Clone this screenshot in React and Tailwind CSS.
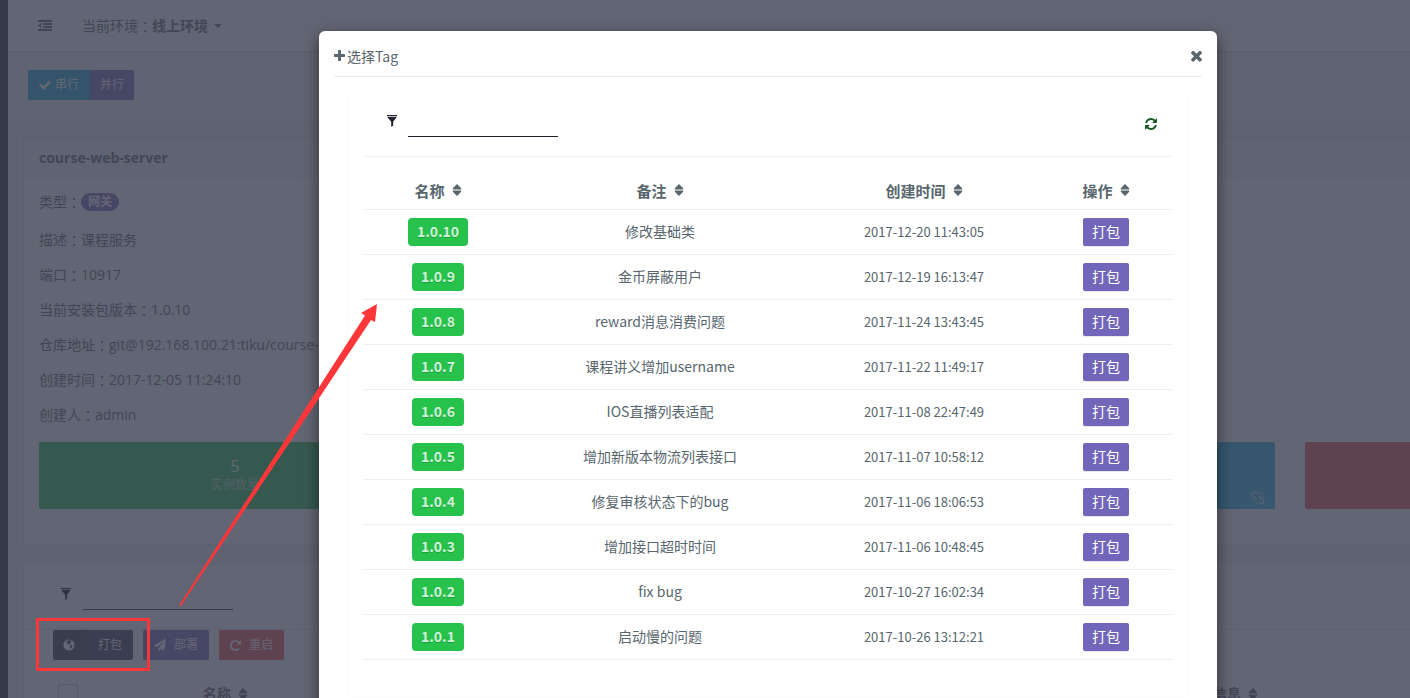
import React from "react";
import { FaPaperPlane } from "react-icons/fa";

const glyphs = {
  plus: ["0 0 1408 1408", "M1408 608v192q0 40-28 68t-68 28h-416v416q0 40-28 68t-68 28h-192q-40 0-68-28t-28-68v-416h-416q-40 0-68-28t-28-68v-192q0-40 28-68t68-28h416v-416q0-40 28-68t68-28h192q40 0 68 28t28 68v416h416q40 0 68 28t28 68z"],
  times: ["110 78 1188 1188", "M1298 1004q0 40-28 68l-136 136q-28 28-68 28t-68-28l-294-294-294 294q-28 28-68 28t-68-28l-136-136q-28-28-28-68t28-68l294-294-294-294q-28-28-28-68t28-68l136-136q28-28 68-28t68 28l294 294 294-294q28-28 68-28t68 28l136 136q28 28 28 68t-28 68l-294 294 294 294q28 28 28 68z"],
  refresh: ["0 0 1536 1536", "M1511 928q0 5-1 7-64 268-268 434.5t-478 166.5q-146 0-282.5-55t-243.5-157l-129 129q-19 19-45 19t-45-19-19-45v-448q0-26 19-45t45-19h448q26 0 45 19t19 45-19 45l-137 137q71 66 161 102t187 36q134 0 250-65t186-179q11-17 53-117 8-23 30-23h192q13 0 22.5 9.5t9.5 22.5zm25-800v448q0 26-19 45t-45 19h-448q-26 0-45-19t-19-45 19-45l138-138q-148-137-349-137-134 0-250 65t-186 179q-11 17-53 117-8 23-30 23h-199q-13 0-22.5-9.5t-9.5-22.5v-7q65-268 270-434.5t480-166.5q146 0 284 55.5t245 156.5l130-129q19-19 45-19t45 19 19 45z"],
  repeat: ["0 0 1536 1536", "M1536 128v448q0 26-19 45t-45 19h-448q-42 0-59-40-17-39 14-69l138-138q-148-137-349-137-104 0-198.5 40.5t-163.5 109.5-109.5 163.5-40.5 198.5 40.5 198.5 109.5 163.5 163.5 109.5 198.5 40.5q119 0 225-52t179-147q7-10 23-12 15 0 25 9l137 138q9 8 9.5 20.5t-7.5 22.5q-109 132-264 204.5t-327 72.5q-156 0-298-61t-245-164-164-245-61-298 61-298 164-245 245-164 298-61q147 0 284.5 55.5t244.5 156.5l130-129q29-31 70-14 39 17 39 59z"],
  check: ["100 240 1592 1300", "M1671 566q0 40-28 68l-724 724-136 136q-28 28-68 28t-68-28l-136-136-362-362q-28-28-28-68t28-68l136-136q28-28 68-28t68 28l294 295 656-657q28-28 68-28t68 28l136 136q28 28 28 68z"],
  outdent: ["0 128 1792 1408", "M384 544v576q0 13-9.5 22.5t-22.5 9.5q-14 0-23-9l-288-288q-9-9-9-23t9-23l288-288q9-9 23-9 13 0 22.5 9.5t9.5 22.5zm1408 768v192q0 13-9.5 22.5t-22.5 9.5h-1728q-13 0-22.5-9.5t-9.5-22.5v-192q0-13 9.5-22.5t22.5-9.5h1728q13 0 22.5 9.5t9.5 22.5zm0-384v192q0 13-9.5 22.5t-22.5 9.5h-1088q-13 0-22.5-9.5t-9.5-22.5v-192q0-13 9.5-22.5t22.5-9.5h1088q13 0 22.5 9.5t9.5 22.5zm0-384v192q0 13-9.5 22.5t-22.5 9.5h-1088q-13 0-22.5-9.5t-9.5-22.5v-192q0-13 9.5-22.5t22.5-9.5h1088q13 0 22.5 9.5t9.5 22.5zm0-384v192q0 13-9.5 22.5t-22.5 9.5h-1728q-13 0-22.5-9.5t-9.5-22.5v-192q0-13 9.5-22.5t22.5-9.5h1728q13 0 22.5 9.5t9.5 22.5z"],
  filter: ["0 0 10 12", "M0 0h10v1.2H0zM0.3 2h9.4L6.2 6.8V10.6L4.2 12V6.8z"],
  sort: ["0 0 10 12", "M5 0L9.2 4.2V5.4H.8V4.2zM.8 6.6H9.2V7.8L5 12L.8 7.8z"],
};

function Glyph({ name, className }) {
  const [box, d] = glyphs[name];
  return (
    <svg viewBox={box} className={`shrink-0 ${className}`} fill="currentColor" aria-hidden="true">
      <path d={d} />
    </svg>
  );
}

function GlobeIcon() {
  return (
    <svg viewBox="0 0 12 12" className="size-3" aria-hidden="true">
      <circle cx="6" cy="6" r="5.6" fill="currentColor" />
      <path d="M4.2 1.4L7.8 1.2L8.6 2.4L7.4 3.8L7.6 4.8L6 5.8L5 4.8L3.8 3.6z" fill="#3a3f51" />
      <path d="M7.6 6L9.4 6.4L8.8 8.6L7.4 9.6L6.6 8.2z" fill="#3a3f51" />
    </svg>
  );
}

function BrokenLinkIcon({ className }) {
  return (
    <svg viewBox="0 0 14 14" className={className} fill="none" stroke="currentColor" strokeLinecap="round" aria-hidden="true">
      <path strokeWidth="1.8" d="M6 2.2C4.2.4 1 1.6 1.2 4.2C1.4 6.4 4.8 6.2 5.2 8.4M8 11.8C9.8 13.6 13 12.4 12.8 9.8C12.6 7.6 9.2 7.8 8.8 5.6" />
      <path strokeWidth="1" d="M8.6 .8V2.8M11.8 1.6L10.4 3.2M13.2 5H11.2M5.4 11.2V13.2M3.6 10.8L2.2 12.4M.8 9H2.8" />
    </svg>
  );
}

const tags = [
  ["1.0.10", "修改基础类", "2017-12-20 11:43:05"],
  ["1.0.9", "金币屏蔽用户", "2017-12-19 16:13:47"],
  ["1.0.8", "reward消息消费问题", "2017-11-24 13:43:45"],
  ["1.0.7", "课程讲义增加username", "2017-11-22 11:49:17"],
  ["1.0.6", "IOS直播列表适配", "2017-11-08 22:47:49"],
  ["1.0.5", "增加新版本物流列表接口", "2017-11-07 10:58:12"],
  ["1.0.4", "修复审核状态下的bug", "2017-11-06 18:06:53"],
  ["1.0.3", "增加接口超时时间", "2017-11-06 10:48:45"],
  ["1.0.2", "fix bug", "2017-10-27 16:02:34"],
  ["1.0.1", "启动慢的问题", "2017-10-26 13:12:21"],
];

const details = [
  ["描述", "课程服务"],
  ["端口", "10917"],
  ["当前安装包版本", "1.0.10"],
  ["仓库地址", "git@192.168.100.21:tiku/course-web-server.git"],
  ["创建时间", "2017-12-05 11:24:10"],
  ["创建人", "admin"],
];

function Colon() {
  return <span className="font-['Noto_Sans_CJK_TC',sans-serif]">：</span>;
}

function SortHeader({ label }) {
  return (
    <button type="button" className="inline-flex items-center gap-[7px] font-bold whitespace-nowrap">
      {label}
      <Glyph name="sort" className="h-3 w-[10px]" />
    </button>
  );
}

function StatCard({ color, children }) {
  return <div className={`relative h-[67px] w-[392px] shrink-0 rounded-xs pt-3 text-center ${color}`}>{children}</div>;
}

function Dashboard() {
  return (
    <div className="flex h-full font-['Open_Sans','Noto_Sans_CJK_SC',sans-serif] text-sm text-[#58666e]">
      <aside className="w-2 shrink-0 bg-[#1c2b36]">
        <div className="h-[61px] border-b border-black/30" />
      </aside>
      <main className="min-w-0 flex-1 overflow-hidden bg-[#f0f3f4]">
        <header className="flex h-[52px] items-center border-b border-[#d5dcde] bg-white pl-[30px]">
          <button type="button" aria-label="收起菜单">
            <Glyph name="outdent" className="h-[11px] w-[14px]" />
          </button>
          <button type="button" className="ml-[30px] flex items-center">
            当前环境<Colon /><b>线上环境</b>
            <svg viewBox="0 0 8 4" className="ml-1.5 h-1 w-2" fill="currentColor" aria-hidden="true">
              <path d="M0 0h8L4 4z" />
            </svg>
          </button>
        </header>

        <div className="flex h-[69px] items-start border-b border-[#dee5e7] bg-[#f6f8f8] pt-[18px] pl-5 text-xs text-white">
          <button type="button" className="flex h-[30px] items-center gap-1 rounded-l-xs bg-[#19a9d5] px-[11px]">
            <Glyph name="check" className="h-[10px] w-3" />
            串行
          </button>
          <button type="button" className="h-[30px] rounded-r-xs bg-[#7266ba] px-[10px]">
            并行
          </button>
        </div>

        <section className="mt-[15px] ml-[15px] border-y border-l border-[#dee5e7] bg-white">
          <h2 className="flex h-[42px] items-center bg-[#f6f8f8] pl-[15px] font-bold">course-web-server</h2>
          <div className="pt-2 pb-[35px] pl-[15px]">
            <p className="flex h-[30px] items-center">
              类型<Colon />
              <span className="flex h-[18px] items-center rounded-full bg-[#7266ba] px-[7px] text-xs font-bold text-white">网关</span>
            </p>
            <div className="mt-[5px]">
              {details.map(([name, value]) => (
                <p key={name} className="flex h-[35px] items-center whitespace-nowrap">{name}<Colon />{value}</p>
              ))}
            </div>
            <div className="mt-[10px] flex gap-[30px]">
              <StatCard color="bg-[#27c24c]">
                <div className="text-base leading-6 text-white">5</div>
                <div className="text-xs leading-[14px] text-[#a9e7b7]">实例数量</div>
              </StatCard>
              <StatCard color="bg-[#7266ba]" />
              <StatCard color="bg-[#23b7e5]">
                <BrokenLinkIcon className="absolute right-[10px] bottom-1 size-[14px] text-[#b0e1f1]" />
              </StatCard>
              <StatCard color="bg-[#f05050]" />
            </div>
          </div>
        </section>

        <section className="mt-5 ml-[15px] border-l border-[#dee5e7] bg-white">
          <div className="flex h-[65px] items-start border-b border-[#dee5e7] pt-[17px] pl-[37px] text-black">
            <Glyph name="filter" className="mt-[6px] h-3 w-[10px]" />
            <input aria-label="筛选实例" className="ml-3 h-7 w-[150px] border-b border-[#222] bg-transparent outline-none" />
          </div>
          <div className="flex gap-[10px] pl-[29px] text-xs text-white">
            <button type="button" className="flex h-[30px] items-center rounded-xs bg-[#3a3f51] pr-[11px]">
              <span className="flex h-full w-[31px] items-center justify-center bg-black/10">
                <GlobeIcon />
              </span>
              <span className="ml-[14px]">打包</span>
            </button>
            <button type="button" className="flex h-[30px] items-center gap-2 rounded-xs bg-[#7266ba] px-[11px]">
              <FaPaperPlane className="size-3" />
              部署
            </button>
            <button type="button" className="flex h-[30px] items-center gap-2 rounded-xs bg-[#f05050] px-[11px]">
              <Glyph name="repeat" className="size-[11px]" />
              重启
            </button>
          </div>
          <div className="mt-6 flex items-start pl-[34px]">
            <input type="checkbox" aria-label="全选" className="size-5 appearance-none border border-[#c0c8cc] bg-white" />
            <div className="ml-[125px] w-[1010px]">
              <SortHeader label="名称" />
            </div>
            <SortHeader label="信息" />
          </div>
        </section>
      </main>
    </div>
  );
}

function TagDialog() {
  return (
    <div role="dialog" aria-labelledby="tag-title" className="h-fit w-full max-w-[898px] rounded-md bg-white px-[15px] pb-12 font-['Noto_Sans_CJK_SC',sans-serif] text-sm text-[#58666e] shadow-[0_5px_15px_rgba(0,0,0,0.5)]">
      <header className="flex h-[46px] items-center justify-between border-b border-[#e8eaec] pt-1">
        <h1 id="tag-title" className="flex items-center gap-0.5">
          <Glyph name="plus" className="size-[11px]" />
          选择Tag
        </h1>
        <button type="button" aria-label="关闭" className="pt-0.5">
          <Glyph name="times" className="size-[11px]" />
        </button>
      </header>
      <div className="mx-[14px] mt-[19px] rounded-sm border-x border-b border-[#fafbfb] bg-white px-[15px] pb-9">
        <div className="flex h-[61px] items-start justify-between border-b border-[#edf1f2] pt-[13px] pr-[15px] pl-[23px]">
          <div className="flex items-start text-[#22222e]">
            <Glyph name="filter" className="mt-[6px] h-3 w-[10px]" />
            <input aria-label="筛选标签" className="ml-[11px] h-7 w-[150px] border-b border-[#22222e] bg-transparent outline-none" />
          </div>
          <button type="button" aria-label="刷新" className="mt-[9px] text-[#1b5a26]">
            <Glyph name="refresh" className="size-3" />
          </button>
        </div>
        <table className="w-full table-fixed text-center">
          <colgroup>
            <col className="w-[148px]" />
            <col />
            <col className="w-[232px]" />
            <col className="w-[132px]" />
          </colgroup>
          <thead>
            <tr className="h-[52px] border-b border-[#edf1f2] text-[15px]">
              {["名称", "备注", "创建时间", "操作"].map((h) => (
                <th key={h} className="pt-[15px]"><SortHeader label={h} /></th>
              ))}
            </tr>
          </thead>
          <tbody>
            {tags.map(([tag, note, time]) => (
              <tr key={tag} className="h-[45px] border-b border-[#eaeff0]">
                <td>
                  <span className="inline-flex h-7 items-center rounded-sm bg-[#27c24c] px-[9px] pb-0.5 text-sm font-bold text-[#d0f2d8] [text-shadow:0_1px_0_rgba(0,0,0,0.2)]">{tag}</span>
                </td>
                <td className="pb-0.5">{note}</td>
                <td className="pt-0.5 text-[13px]">{time}</td>
                <td>
                  <button type="button" className="h-7 rounded-xs bg-[#7266ba] px-[9px] pb-0.5 text-white shadow-[0_1px_1px_rgba(90,90,90,0.15)]">打包</button>
                </td>
              </tr>
            ))}
          </tbody>
        </table>
      </div>
    </div>
  );
}

export default function App() {
  return (
    <div className="relative h-screen overflow-hidden">
      <Dashboard />
      <div className="absolute inset-0 flex justify-center overflow-hidden bg-[rgba(59,62,80,0.8)] pt-[31px] pl-[126px]">
        <TagDialog />
      </div>
      <div className="pointer-events-none absolute top-[618px] left-9 h-[53px] w-[114px] border-3 border-[#fd3739]" />
      <svg viewBox="0 0 200 304" className="pointer-events-none absolute top-[303px] left-[178px] h-[304px] w-[200px]" fill="#fd3739" aria-hidden="true">
        <path d="M1 302.5L187 12.5L183 10L199 1L197 19L193 17L2.5 303.5z" />
      </svg>
    </div>
  );
}
